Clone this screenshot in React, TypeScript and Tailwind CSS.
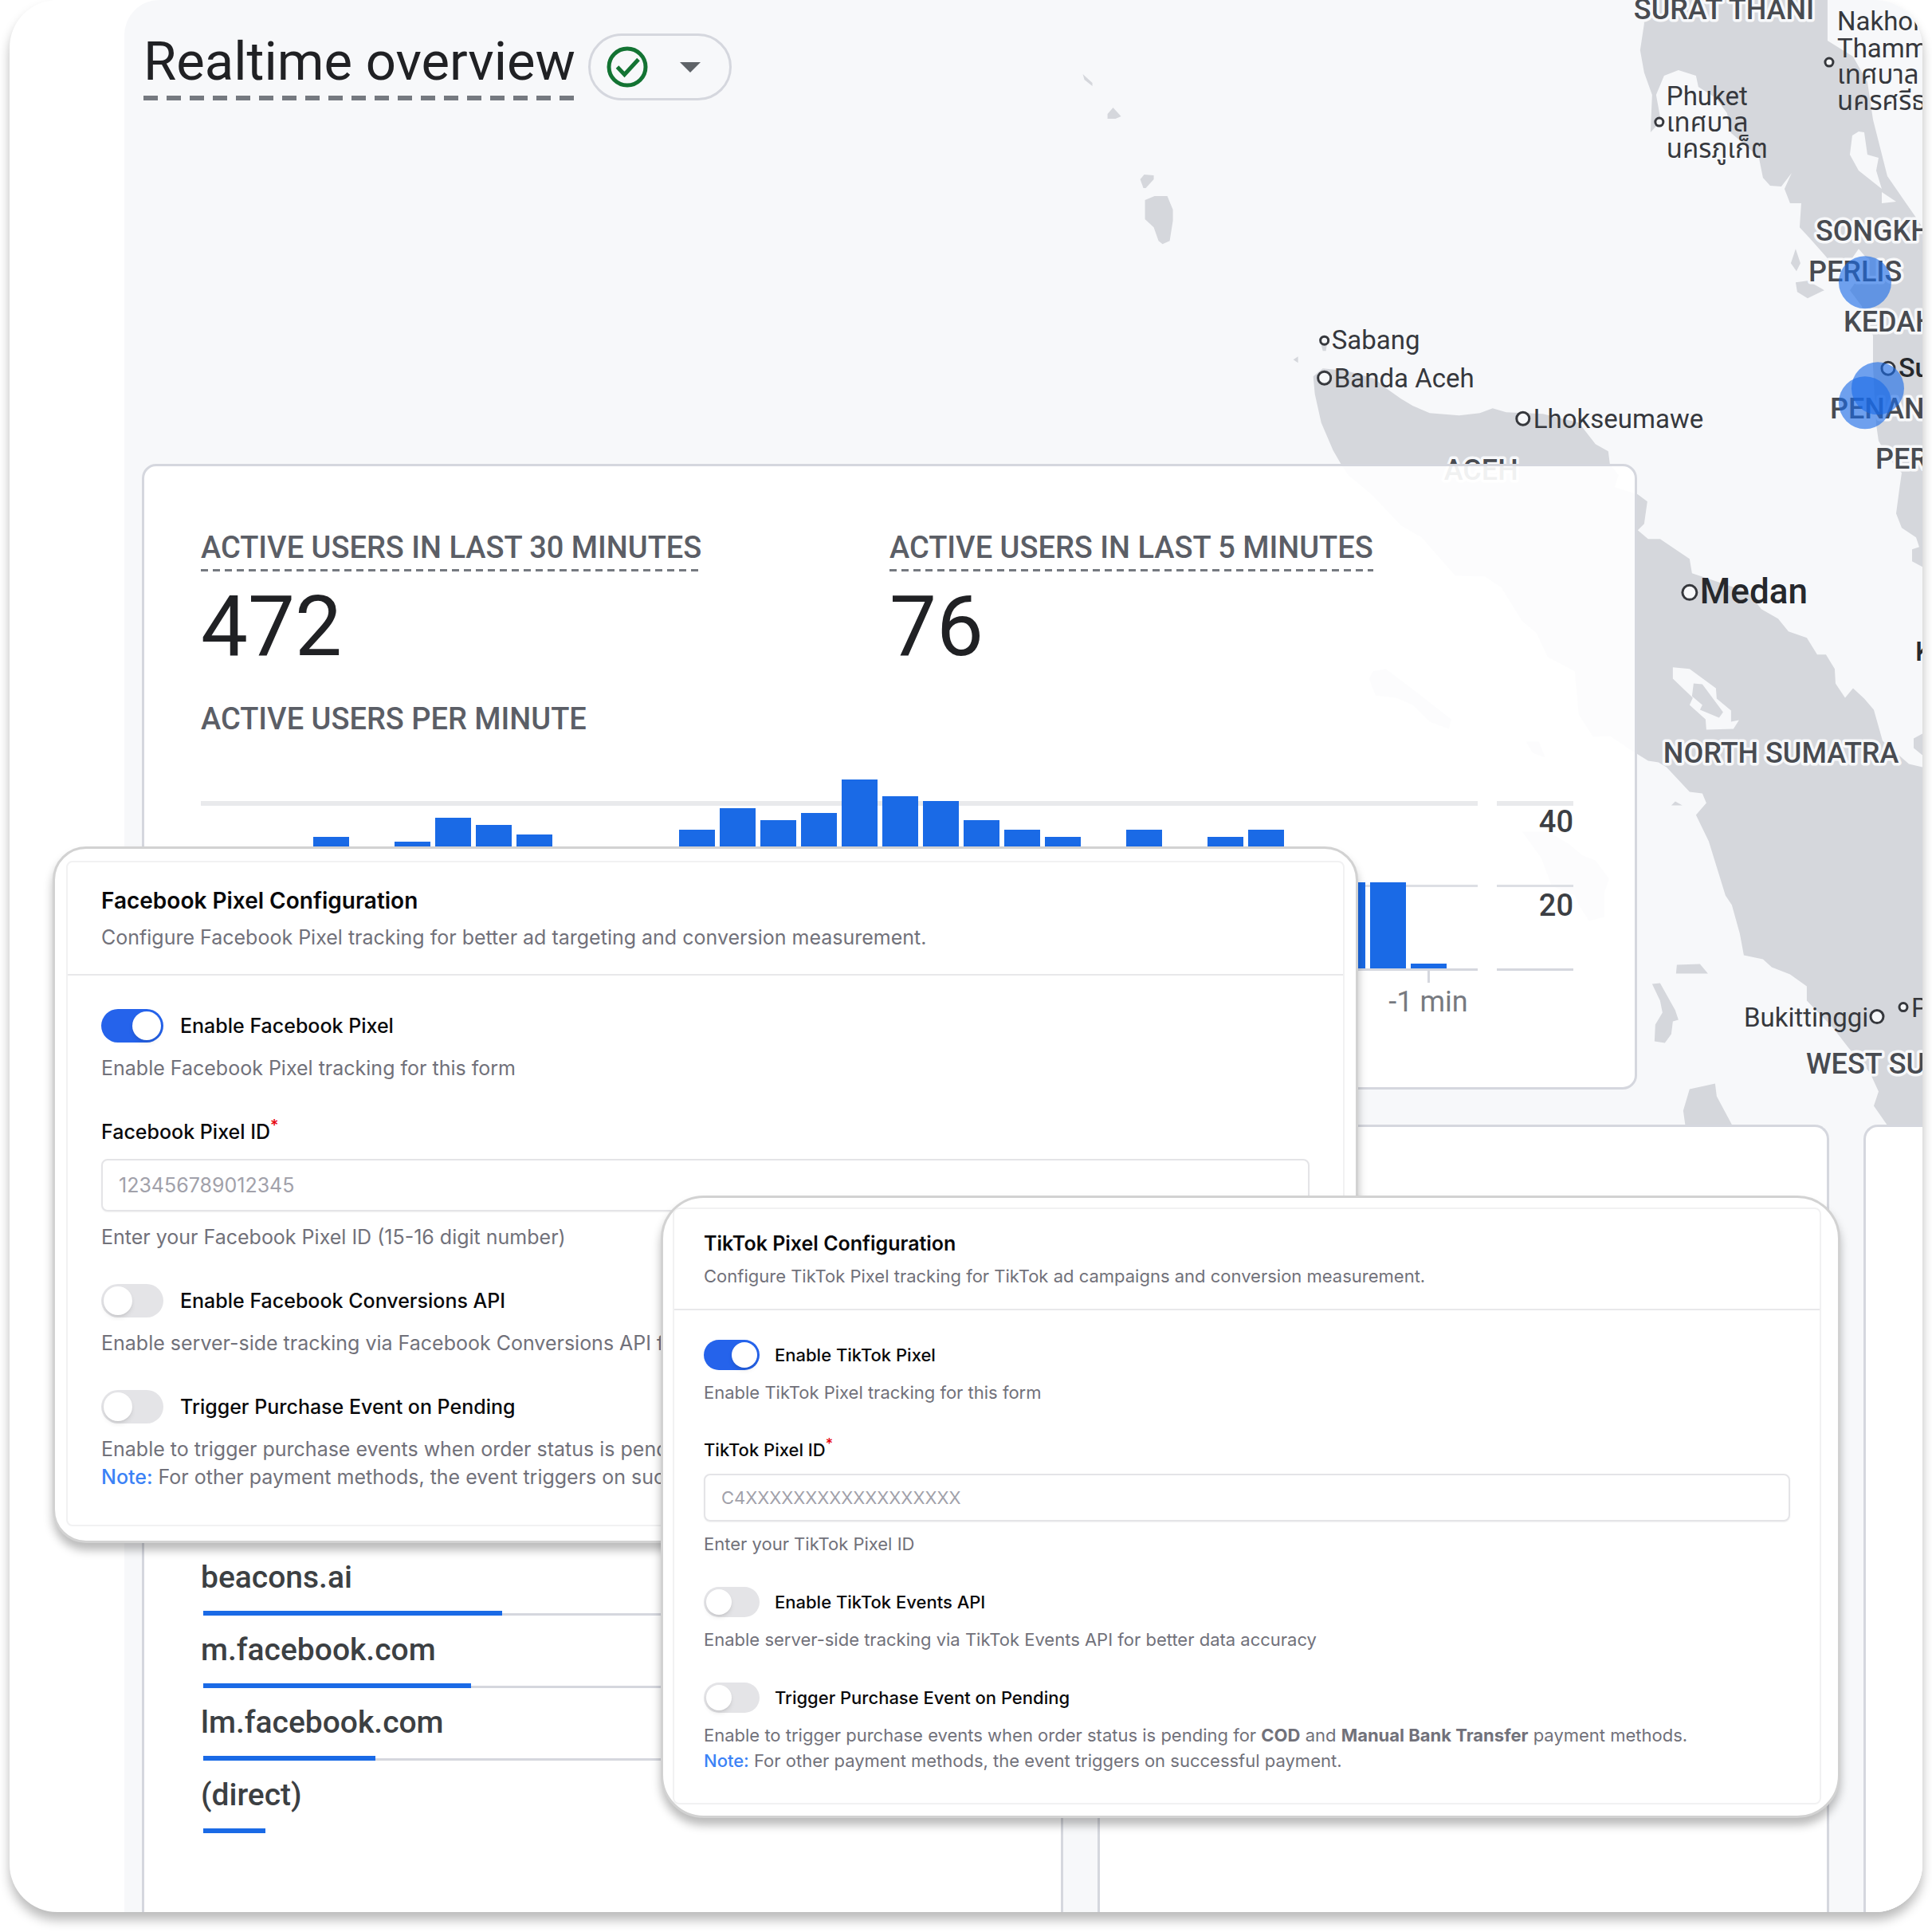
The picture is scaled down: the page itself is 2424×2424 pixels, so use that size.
import { useId } from "react";
import { clsx } from "clsx";

type PanelSize = "lg" | "md";

interface PixelPanelProps {
  size: PanelSize;
  name: string;
  description: string;
  placeholder: string;
  idHint: string;
  apiLabel: string;
  apiHint: string;
  className: string;
}

interface ToggleProps {
  size: PanelSize;
  label: string;
  checked?: boolean;
  children: React.ReactNode;
}

interface MapLabel {
  text: string;
  x: number;
  y: number;
}

const barHeights = [
  132, 120, 165, 141, 159, 189, 180, 168, 126, 138, 117, 174, 201, 186, 195,
  237, 216, 210, 186, 174, 165, 144, 174, 129, 165, 174, 138, 108, 108, 6,
];

const sources = [
  { name: "beacons.ai", share: 37.3 },
  { name: "m.facebook.com", share: 33.4 },
  { name: "lm.facebook.com", share: 21.5 },
  { name: "(direct)", share: 7.8 },
];

const regions: MapLabel[] = [
  { text: "SURAT THANI", x: 2050, y: 24 },
  { text: "SONGKHLA", x: 2278, y: 302 },
  { text: "PERLIS", x: 2269, y: 353 },
  { text: "KEDAH", x: 2313, y: 416 },
  { text: "PENANG", x: 2296, y: 525 },
  { text: "PERAK", x: 2353, y: 588 },
  { text: "ACEH", x: 1812, y: 602 },
  { text: "NORTH SUMATRA", x: 2087, y: 957 },
  { text: "WEST SUMATRA", x: 2266, y: 1346 },
];

const cities: MapLabel[] = [
  { text: "Nakhon Si", x: 2305, y: 38 },
  { text: "Thammarat", x: 2305, y: 72 },
  { text: "เทศบาล", x: 2305, y: 105 },
  { text: "นครศรีธรรมราช", x: 2305, y: 138 },
  { text: "Phuket", x: 2091, y: 132 },
  { text: "เทศบาล", x: 2091, y: 165 },
  { text: "นครภูเก็ต", x: 2091, y: 198 },
  { text: "Sabang", x: 1671, y: 438 },
  { text: "Banda Aceh", x: 1674, y: 486 },
  { text: "Lhokseumawe", x: 1924, y: 537 },
  { text: "Bukittinggi", x: 2188, y: 1287 },
  { text: "Pekanbaru", x: 2398, y: 1275 },
];

const dots = [
  { x: 2295, y: 78, r: 5 },
  { x: 2082, y: 153, r: 5 },
  { x: 1662, y: 427, r: 5 },
  { x: 1662, y: 474, r: 8 },
  { x: 1911, y: 525, r: 8 },
  { x: 2120, y: 743, r: 9 },
  { x: 2355, y: 1275, r: 8 },
  { x: 2388, y: 1263, r: 5 },
  { x: 2369, y: 462, r: 8 },
];

const visitors = [
  { x: 2340, y: 354 },
  { x: 2356, y: 487 },
  { x: 2340, y: 505 },
];

const land = [
  // Sumatra
  "1648,472 1650,494 1658,530 1673,565 1684,584 1692,596 1721,620 1758,659 1784,674 1826,722 1863,723 1884,737 1910,779 1928,794 1942,824 1976,842 1981,896 1999,924 2020,923 2047,941 2068,954 2081,956 2091,962 2120,993 2136,995 2141,1007 2128,1022 2144,1055 2165,1123 2173,1135 2183,1171 2188,1198 2212,1203 2223,1213 2246,1222 2267,1237 2267,1255 2299,1288 2320,1315 2346,1345 2357,1369 2351,1387 2370,1414 2412,1414 2412,962 2395,958 2362,929 2351,890 2339,876 2325,863 2315,875 2303,857 2302,839 2291,821 2280,821 2267,800 2244,792 2231,776 2210,764 2194,743 2150,728 2123,719 2120,701 2083,676 2068,676 2055,665 2063,657 2067,629 2055,620 2026,611 2031,596 2020,582 2018,566 2002,557 1981,530 1936,519 1890,517 1873,512 1857,518 1831,521 1794,518 1773,509 1758,500 1741,488 1725,475 1690,465 1660,462",
  // Malay peninsula
  "2063,0 2063,30 2058,63 2063,91 2073,119 2071,166 2084,152 2078,119 2088,95 2106,88 2128,95 2131,109 2153,123 2167,142 2171,166 2190,182 2207,198 2212,223 2221,233 2235,234 2248,217 2239,237 2246,255 2260,255 2258,285 2271,299 2293,324 2318,332 2332,312 2346,328 2321,364 2336,384 2350,421 2350,459 2354,532 2357,553 2370,575 2386,593 2383,614 2379,644 2386,662 2404,674 2408,686 2399,689 2399,704 2412,711 2412,285 2404,273 2368,221 2350,150 2343,103 2325,71 2293,51 2293,0",
  "1359,93 1371,104 1371,108 1361,100",
  "1397,135 1407,146 1400,149 1390,149 1390,143",
  "1436,219 1448,220 1448,225 1438,236 1435,236 1431,225",
  "1449,246 1465,246 1472,263 1472,277 1468,302 1459,306 1454,302 1448,285 1437,275 1437,251",
  "1623,451 1629,447 1629,455",
  "1656,425 1666,425 1664,440 1660,440",
  "1723,842 1739,839 1771,863 1821,902 1818,914 1794,905 1773,884 1752,875 1726,872 1718,851",
  "1915,930 1931,930 1939,950 1923,944",
  "1910,1043 1942,1043 1968,1058 1986,1073 2002,1079 2019,1102 2013,1120 2013,1150 1994,1155 1981,1135 1976,1123 1947,1111 1934,1076",
  "2097,1010 2102,1005 2111,1010",
  "2104,1210 2133,1209 2143,1221 2103,1221",
  "2073,1234 2083,1233 2102,1267 2106,1279 2099,1281 2097,1297 2089,1308 2076,1306 2077,1285 2086,1270 2083,1255",
  "2120,1366 2152,1359 2154,1375 2175,1414 2115,1414 2112,1393",
  "2253,312 2259,330 2254,340 2247,330",
  "2253,354 2268,352 2289,364 2268,374 2255,366",
  "2401,926 2412,920 2412,947 2401,938",
];

const water = [
  "2099,837 2120,839 2153,863 2154,876 2172,891 2172,905 2182,903 2175,914 2141,915 2140,902 2120,884 2124,875 2099,851",
  "2332,165 2339,166 2343,194 2357,198 2354,214 2361,237 2332,214 2321,194 2324,170",
  "2361,241 2379,253 2361,255",
];

const samosir =
  "2125,857 2136,858 2162,893 2157,900 2133,890 2136,884 2123,873";

const panelStyles = {
  lg: {
    frame: "rounded-[42px] pt-[15px] pr-[14px] pb-[18px] pl-[14px]",
    header: "px-[42px] pt-[34px] pb-[28px] gap-[15px]",
    title: "text-[28px] leading-[28px]",
    text: "text-[25px] leading-[35px]",
    body: "px-[42px] pt-[42px] pb-[42px] gap-[41px]",
    label: "text-[25px] leading-[25px]",
    toggleRow: "gap-[21px]",
    stack: "gap-[15px]",
    field: "pt-[9px]",
    input: "h-[66px] px-5 mt-[6px] text-[25px]",
    toggle:
      "h-[42px] w-[78px] before:m-[3px] before:size-9 checked:before:translate-x-9",
    sup: "text-[20px]",
  },
  md: {
    frame: "rounded-[54px] pt-[12px] pr-[21px] pb-[14px] pl-[12px]",
    header: "px-[37px] pt-[31px] pb-[25px] gap-[12px]",
    title: "text-[25px] leading-[25px]",
    text: "text-[22px] leading-[32px]",
    body: "px-[37px] pt-[37px] pb-[37px] gap-[38px]",
    label: "text-[22px] leading-[22px]",
    toggleRow: "gap-[19px]",
    stack: "gap-[12px]",
    field: "pt-[7px]",
    input: "h-[60px] px-5 mt-[7px] text-[22px]",
    toggle:
      "h-[38px] w-[70px] before:m-[3px] before:size-8 checked:before:translate-x-8",
    sup: "text-[18px]",
  },
};

function Toggle({ size, label, checked = false, children }: ToggleProps) {
  const id = useId();
  const s = panelStyles[size];

  return (
    <div className={clsx("flex flex-col", s.stack)}>
      <div className={clsx("flex items-center", s.toggleRow)}>
        <input
          id={id}
          type="checkbox"
          role="switch"
          defaultChecked={checked}
          className={clsx(
            "shrink-0 appearance-none rounded-full bg-[#e4e4e7] checked:bg-[#2563eb] before:block before:rounded-full before:bg-white before:shadow-md",
            s.toggle,
          )}
        />
        <label htmlFor={id} className={clsx("font-medium text-[#09090b]", s.label)}>
          {label}
        </label>
      </div>
      <p className={clsx("text-[#71717a]", s.text)}>{children}</p>
    </div>
  );
}

function PixelPanel({
  size,
  name,
  description,
  placeholder,
  idHint,
  apiLabel,
  apiHint,
  className,
}: PixelPanelProps) {
  const id = useId();
  const s = panelStyles[size];

  return (
    <section
      className={clsx(
        "absolute overflow-hidden border-[3px] border-[#d2d2d2] bg-white font-['Inter',sans-serif] shadow-[0_9px_12px_rgba(0,0,0,0.27)]",
        s.frame,
        className,
      )}
    >
      <div className="rounded-lg border-2 border-[#f1f1f2]">
        <header
          className={clsx("flex flex-col border-b-2 border-[#e8e8ea]", s.header)}
        >
          <h2 className={clsx("font-semibold text-[#09090b]", s.title)}>
            {name} Pixel Configuration
          </h2>
          <p className={clsx("text-[#71717a]", s.text)}>{description}</p>
        </header>
        <div className={clsx("flex flex-col", s.body)}>
          <Toggle size={size} label={`Enable ${name} Pixel`} checked>
            Enable {name} Pixel tracking for this form
          </Toggle>
          <div className={clsx("flex flex-col", s.stack, s.field)}>
            <label
              htmlFor={id}
              className={clsx("font-medium text-[#09090b]", s.label)}
            >
              {name} Pixel ID
              <sup className={clsx("text-red-600", s.sup)}>*</sup>
            </label>
            <input
              id={id}
              type="text"
              placeholder={placeholder}
              className={clsx(
                "w-full rounded-lg border-2 border-[#e4e4e7] bg-white shadow-xs outline-none placeholder:text-[#a1a1aa]",
                s.input,
              )}
            />
            <p className={clsx("text-[#71717a]", s.text)}>{idHint}</p>
          </div>
          <Toggle size={size} label={apiLabel}>
            {apiHint}
          </Toggle>
          <Toggle size={size} label="Trigger Purchase Event on Pending">
            Enable to trigger purchase events when order status is pending for{" "}
            <strong className="font-bold">COD</strong> and{" "}
            <strong className="font-bold">Manual Bank Transfer</strong> payment
            methods.
            <br />
            <span className="font-medium text-[#3b82f6]">Note:</span> For other
            payment methods, the event triggers on successful payment.
          </Toggle>
        </div>
      </div>
    </section>
  );
}

function VisitorMap() {
  return (
    <svg
      viewBox="157 0 2255 2400"
      preserveAspectRatio="xMaxYMin slice"
      className="absolute inset-0 h-full w-full"
      aria-hidden="true"
    >
      <g fill="#d5d7dc">
        {land.map((points) => (
          <polygon key={points} points={points} />
        ))}
      </g>
      <g fill="#f7f8fa">
        {water.map((points) => (
          <polygon key={points} points={points} />
        ))}
      </g>
      <polygon points={samosir} fill="#d5d7dc" />
      <g
        className="font-['Roboto','Noto_Sans',sans-serif] text-[36px] font-medium"
        fill="#484b51"
        stroke="#f7f8fa"
        strokeWidth={7}
        strokeLinejoin="round"
        paintOrder="stroke"
      >
        {regions.map((label) => (
          <text key={label.text} x={label.x} y={label.y}>
            {label.text}
          </text>
        ))}
      </g>
      <g
        className="font-['Roboto','Noto_Sans_Thai','Noto_Sans',sans-serif] text-[33px]"
        fill="#36383d"
      >
        {cities.map((label) => (
          <text key={`${label.text}-${label.x}`} x={label.x} y={label.y}>
            {label.text}
          </text>
        ))}
      </g>
      <g
        className="font-['Roboto',sans-serif] text-[44px] font-medium"
        fill="#26282c"
      >
        <text x={2133} y={757}>
          Medan
        </text>
        <text x={2403} y={829} className="text-[34px]">
          Kuala Lumpur
        </text>
        <text x={2382} y={473} className="text-[34px]">
          Sungai Petani
        </text>
      </g>
      <g fill="#f7f8fa" stroke="#36383d" strokeWidth={3}>
        {dots.map((dot) => (
          <circle key={`${dot.x}-${dot.y}`} cx={dot.x} cy={dot.y} r={dot.r} />
        ))}
      </g>
      <g fill="#1a6ae6" fillOpacity={0.62}>
        {visitors.map((spot) => (
          <circle key={`${spot.x}-${spot.y}`} cx={spot.x} cy={spot.y} r={33} />
        ))}
      </g>
    </svg>
  );
}

function Metric({ label, value }: { label: string; value: number }) {
  return (
    <div>
      <div className="inline-block">
        <h3 className="text-[38px] leading-[38px] font-medium text-[#5b5e66]">
          {label}
        </h3>
        <div className="mt-[8px] h-[3px] bg-[repeating-linear-gradient(90deg,#757980_0_9px,transparent_9px_15px)]" />
      </div>
      <p className="mt-[17px] text-[105px] leading-[105px] text-[#202124]">
        {value}
      </p>
    </div>
  );
}

function UsersPerMinute() {
  return (
    <div className="mt-[54px] flex gap-6">
      <div className="flex-1">
        <div className="relative h-[243px] border-b-[3px] border-[#d5d7de]">
          <div className="absolute inset-x-0 top-[30px] h-[6px] bg-[#e9eaec]" />
          <div className="absolute inset-x-0 top-[135px] h-[3px] bg-[#dddfe4]" />
          <div className="relative flex h-full items-end gap-[6px] px-[39px]">
            {barHeights.map((height, i) => (
              <div
                key={i}
                className="flex-1 bg-[#1a6ae6]"
                style={{ height: `${height}px` }}
              />
            ))}
          </div>
        </div>
        <div className="ml-auto flex w-[124px] flex-col items-center">
          <div className="h-[15px] w-[3px] bg-[#d5d7de]" />
          <span className="mt-[6px] text-[36px] leading-[36px] text-[#777a80]">
            -1 min
          </span>
        </div>
      </div>
      <div className="w-24 pt-[30px] text-right text-[38px] leading-[40px] font-medium text-[#3c3f44]">
        <div className="h-[105px] border-t-[6px] border-[#e9eaec]">40</div>
        <div className="h-[105px] border-t-[3px] border-[#dddfe4] pt-[3px]">
          20
        </div>
        <div className="border-t-[3px] border-[#d5d7de]" />
      </div>
    </div>
  );
}

export default function App() {
  return (
    <div className="relative overflow-hidden bg-white pb-6 font-['Roboto',sans-serif]">
      <div className="mx-3 overflow-hidden rounded-[60px] bg-white pl-[144px] shadow-[0_10px_14px_rgba(0,0,0,0.27)]">
        <main className="relative overflow-hidden rounded-tl-[44px] bg-[#f7f8fa] pl-[22px]">
          <VisitorMap />

          <div className="relative">
            <div className="flex items-start gap-4 pt-[42px] pl-[2px]">
              <div>
                <h1 className="pt-[2px] text-[67px] leading-[67px] text-[#202124]">
                  Realtime overview
                </h1>
                <div className="mt-[9px] h-[6px] bg-[repeating-linear-gradient(90deg,#757980_0_18px,transparent_18px_29px)]" />
              </div>
              <button
                type="button"
                aria-label="Data quality"
                className="flex h-[84px] w-[180px] items-center gap-[40px] rounded-full border-[3px] border-[#d5d7de] pl-[20px]"
              >
                <svg viewBox="0 0 52 52" className="size-[52px]" fill="none">
                  <circle cx="26" cy="26" r="23" stroke="#137333" strokeWidth="5" />
                  <path d="M13.500 26l9 9.500L40 16.500" stroke="#137333" strokeWidth="5" />
                </svg>
                <svg viewBox="0 0 26 13" className="h-[13px] w-[26px]">
                  <path d="M0 0h26L13 13z" fill="#5f6368" />
                </svg>
              </button>
            </div>

            <section className="mt-[456px] mr-[358px] rounded-[18px] border-[3px] border-[#d5d7de] bg-white/92 pt-[83px] pr-[77px] pb-[89px] pl-[71px]">
              <div className="grid grid-cols-2 gap-x-[6px]">
                <Metric label="ACTIVE USERS IN LAST 30 MINUTES" value={472} />
                <Metric label="ACTIVE USERS IN LAST 5 MINUTES" value={76} />
              </div>
              <h3 className="mt-[44px] text-[38px] leading-[38px] font-medium text-[#5b5e66]">
                ACTIVE USERS PER MINUTE
              </h3>
              <UsersPerMinute />
            </section>

            <div className="mt-[44px] grid grid-cols-[1156fr_918fr_74fr] gap-x-[43px]">
              <section className="rounded-t-[18px] border-[3px] border-b-0 border-[#d5d7de] bg-white px-[71px] pt-[545px] pb-[99px]">
                <ul className="flex flex-col gap-[23px]">
                  {sources.map((source, i) => (
                    <li key={source.name}>
                      <span className="block text-[39px] leading-[40px] font-medium text-[#3c4043]">
                        {source.name}
                      </span>
                      <div className="mt-[22px] flex items-end pl-[3px]">
                        <div
                          className="h-[6px] bg-[#1a6ae6]"
                          style={{ width: `${source.share}%` }}
                        />
                        {i < sources.length - 1 && (
                          <div className="h-[3px] flex-1 bg-[#d5d7de]" />
                        )}
                      </div>
                    </li>
                  ))}
                </ul>
              </section>
              <section className="rounded-t-[18px] border-[3px] border-b-0 border-[#d5d7de] bg-white" />
              <section className="rounded-tl-[18px] border-t-[3px] border-l-[3px] border-[#d5d7de] bg-white" />
            </div>
          </div>
        </main>
      </div>

      <PixelPanel
        size="lg"
        name="Facebook"
        description="Configure Facebook Pixel tracking for better ad targeting and conversion measurement."
        placeholder="123456789012345"
        idHint="Enter your Facebook Pixel ID (15-16 digit number)"
        apiLabel="Enable Facebook Conversions API"
        apiHint="Enable server-side tracking via Facebook Conversions API for better data accuracy"
        className="top-[1062px] right-[720px] left-[66px]"
      />
      <PixelPanel
        size="md"
        name="TikTok"
        description="Configure TikTok Pixel tracking for TikTok ad campaigns and conversion measurement."
        placeholder="C4XXXXXXXXXXXXXXXXXX"
        idHint="Enter your TikTok Pixel ID"
        apiLabel="Enable TikTok Events API"
        apiHint="Enable server-side tracking via TikTok Events API for better data accuracy"
        className="top-[1500px] right-[115px] left-[829px]"
      />
    </div>
  );
}
